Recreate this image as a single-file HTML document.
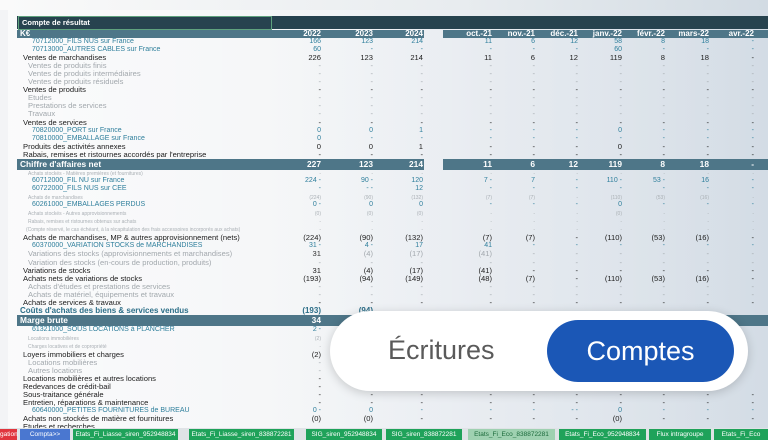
<!DOCTYPE html>
<html><head><meta charset="utf-8"><style>
*{margin:0;padding:0;box-sizing:border-box}
body{width:768px;height:440px;overflow:hidden;position:relative;font-family:"Liberation Sans",sans-serif;background:linear-gradient(90deg,#f3f4f6 0%,#f1f3f5 35%,#e3e8ee 65%,#d3dce5 100%)}
.top{position:absolute;left:0;top:0;width:768px;height:10px;background:linear-gradient(90deg,#fafafa,#e8ecef 60%,#d2dbe3)}
.sheet{position:absolute;left:8px;top:10px;width:760px;height:418px;background:linear-gradient(90deg,rgba(255,255,255,.6),rgba(255,255,255,.2) 50%,rgba(255,255,255,0))}
.r{position:absolute;left:0;width:768px;height:8px;line-height:8px;font-size:7.6px;color:#1d1d1d;white-space:nowrap}
.r span{position:absolute;top:0}
.l{left:23px}
.t{color:#2f7f9c;font-size:7px}.t .l{left:32px}
.g{color:#a2a8ad}.g .l{left:28px}
.s{color:#aab0b5;font-size:5px}.s .l{left:28px}
.v{width:40px;text-align:right}
.a{left:281px}.b{left:333px}.c{left:383px}.d{left:452px}.e{left:495px}.f{left:538px}.h{left:582px}.i{left:625px}.j{left:669px}.k{left:714px}
.band{position:absolute;height:11px;background:#4e7688}
.r.w{color:#fff;font-weight:bold;font-size:8.4px;height:11px;line-height:11px}
.r.w .l{left:20px}
.tabs{position:absolute;left:0;top:428px;width:768px;height:12px;background:#dfe3e6}
.tab{position:absolute;top:1px;height:11px;font-size:6.5px;line-height:11px;color:#fff;text-align:center;background:#1fa25a}
</style></head><body>
<div class="top"></div>
<div class="sheet"></div>
<!-- header -->
<div style="position:absolute;left:17px;top:16px;width:751px;height:13px;background:#27434f"></div>
<div style="position:absolute;left:18px;top:16px;width:254px;height:14px;border:1px solid #5fa27e;color:#fff;font-weight:bold;font-size:7.5px;line-height:12px;padding-left:3px">Compte de résultat</div>
<div class="band" style="left:17px;top:30px;width:407px;height:8px;background:#4e7688"></div>
<div class="band" style="left:443px;top:30px;width:325px;height:8px;background:#4e7688"></div>
<div class="r w" style="top:29px;height:9px;line-height:9px;font-size:8px"><span class="l">K€</span><span class="v a">2022</span><span class="v b">2023</span><span class="v c">2024</span><span class="v d">oct.-21</span><span class="v e">nov.-21</span><span class="v f">déc.-21</span><span class="v h">janv.-22</span><span class="v i">févr.-22</span><span class="v j">mars-22</span><span class="v k">avr.-22</span></div>

<div class="r t" style="top:38px"><span class="l">70712000_FILS NUS sur France</span><span class="v a">166</span><span class="v b">123</span><span class="v c">214</span><span class="v d">11</span><span class="v e">6</span><span class="v f">12</span><span class="v h">58</span><span class="v i">8</span><span class="v j">18</span><span class="v k">-</span></div>
<div class="r t" style="top:46px"><span class="l">70713000_AUTRES CABLES sur France</span><span class="v a">60</span><span class="v b">-</span><span class="v c">-</span><span class="v d">-</span><span class="v e">-</span><span class="v f">-</span><span class="v h">60</span><span class="v i">-</span><span class="v j">-</span><span class="v k">-</span></div>
<div class="r" style="top:54px"><span class="l">Ventes de marchandises</span><span class="v a">226</span><span class="v b">123</span><span class="v c">214</span><span class="v d">11</span><span class="v e">6</span><span class="v f">12</span><span class="v h">119</span><span class="v i">8</span><span class="v j">18</span><span class="v k">-</span></div>
<div class="r g" style="top:62px"><span class="l">Ventes de produits finis</span><span class="v a">-</span><span class="v b">-</span><span class="v c">-</span><span class="v d">-</span><span class="v e">-</span><span class="v f">-</span><span class="v h">-</span><span class="v i">-</span><span class="v j">-</span><span class="v k">-</span></div>
<div class="r g" style="top:70px"><span class="l">Ventes de produits intermédiaires</span><span class="v a">-</span><span class="v b">-</span><span class="v c">-</span><span class="v d">-</span><span class="v e">-</span><span class="v f">-</span><span class="v h">-</span><span class="v i">-</span><span class="v j">-</span><span class="v k">-</span></div>
<div class="r g" style="top:78px"><span class="l">Ventes de produits résiduels</span><span class="v a">-</span><span class="v b">-</span><span class="v c">-</span><span class="v d">-</span><span class="v e">-</span><span class="v f">-</span><span class="v h">-</span><span class="v i">-</span><span class="v j">-</span><span class="v k">-</span></div>
<div class="r" style="top:86px"><span class="l">Ventes de produits</span><span class="v a">-</span><span class="v b">-</span><span class="v c">-</span><span class="v d">-</span><span class="v e">-</span><span class="v f">-</span><span class="v h">-</span><span class="v i">-</span><span class="v j">-</span><span class="v k">-</span></div>
<div class="r g" style="top:94px"><span class="l">Etudes</span><span class="v a">-</span><span class="v b">-</span><span class="v c">-</span><span class="v d">-</span><span class="v e">-</span><span class="v f">-</span><span class="v h">-</span><span class="v i">-</span><span class="v j">-</span><span class="v k">-</span></div>
<div class="r g" style="top:102px"><span class="l">Prestations de services</span><span class="v a">-</span><span class="v b">-</span><span class="v c">-</span><span class="v d">-</span><span class="v e">-</span><span class="v f">-</span><span class="v h">-</span><span class="v i">-</span><span class="v j">-</span><span class="v k">-</span></div>
<div class="r g" style="top:110px"><span class="l">Travaux</span><span class="v a">-</span><span class="v b">-</span><span class="v c">-</span><span class="v d">-</span><span class="v e">-</span><span class="v f">-</span><span class="v h">-</span><span class="v i">-</span><span class="v j">-</span><span class="v k">-</span></div>
<div class="r" style="top:119px"><span class="l">Ventes de services</span><span class="v a">-</span><span class="v b">-</span><span class="v c">-</span><span class="v d">-</span><span class="v e">-</span><span class="v f">-</span><span class="v h">-</span><span class="v i">-</span><span class="v j">-</span><span class="v k">-</span></div>
<div class="r t" style="top:127px"><span class="l">70820000_PORT sur France</span><span class="v a">0</span><span class="v b">0</span><span class="v c">1</span><span class="v d">-</span><span class="v e">-</span><span class="v f">-</span><span class="v h">0</span><span class="v i">-</span><span class="v j">-</span><span class="v k">-</span></div>
<div class="r t" style="top:135px"><span class="l">70810000_EMBALLAGE sur France</span><span class="v a">0</span><span class="v b">-</span><span class="v c">-</span><span class="v d">-</span><span class="v e">-</span><span class="v f">-</span><span class="v h">-</span><span class="v i">-</span><span class="v j">-</span><span class="v k">-</span></div>
<div class="r" style="top:143px"><span class="l">Produits des activités annexes</span><span class="v a">0</span><span class="v b">0</span><span class="v c">1</span><span class="v d">-</span><span class="v e">-</span><span class="v f">-</span><span class="v h">0</span><span class="v i">-</span><span class="v j">-</span><span class="v k">-</span></div>
<div class="r" style="top:151px"><span class="l">Rabais, remises et ristournes accordés par l'entreprise</span><span class="v a">-</span><span class="v b">-</span><span class="v c">-</span><span class="v d">-</span><span class="v e">-</span><span class="v f">-</span><span class="v h">-</span><span class="v i">-</span><span class="v j">-</span><span class="v k">-</span></div>
<div class="band" style="left:17px;top:159px;width:407px"></div><div class="band" style="left:443px;top:159px;width:325px"></div>
<div class="r w" style="top:159px"><span class="l">Chiffre d'affaires net</span><span class="v a">227</span><span class="v b">123</span><span class="v c">214</span><span class="v d">11</span><span class="v e">6</span><span class="v f">12</span><span class="v h">119</span><span class="v i">8</span><span class="v j">18</span><span class="v k">-</span></div>
<div class="r s" style="top:170px"><span class="l">Achats stockés - Matières premières (et fournitures)</span><span class="v a">-</span><span class="v b">-</span><span class="v c">-</span><span class="v d">-</span><span class="v e">-</span><span class="v f">-</span><span class="v h">-</span><span class="v i">-</span><span class="v j">-</span><span class="v k">-</span></div>
<div class="r t" style="top:177px"><span class="l">60712000_FIL NU sur France</span><span class="v a">224 -</span><span class="v b">90 -</span><span class="v c">120</span><span class="v d">7 -</span><span class="v e">7</span><span class="v f">-</span><span class="v h">110 -</span><span class="v i">53 -</span><span class="v j">16</span><span class="v k">-</span></div>
<div class="r t" style="top:185px"><span class="l">60722000_FILS NUS sur CEE</span><span class="v a">-</span><span class="v b">- -</span><span class="v c">12</span><span class="v d">-</span><span class="v e">-</span><span class="v f">-</span><span class="v h">-</span><span class="v i">-</span><span class="v j">-</span><span class="v k">-</span></div>
<div class="r s" style="top:194px"><span class="l">Achats de marchandises</span><span class="v a">(224)</span><span class="v b">(90)</span><span class="v c">(132)</span><span class="v d">(7)</span><span class="v e">(7)</span><span class="v f">-</span><span class="v h">(110)</span><span class="v i">(53)</span><span class="v j">(16)</span><span class="v k">-</span></div>
<div class="r t" style="top:201px"><span class="l">60261000_EMBALLAGES PERDUS</span><span class="v a">0 -</span><span class="v b">0</span><span class="v c">0</span><span class="v d">-</span><span class="v e">-</span><span class="v f">-</span><span class="v h">0</span><span class="v i">-</span><span class="v j">-</span><span class="v k">-</span></div>
<div class="r s" style="top:210px"><span class="l">Achats stockés - Autres approvisionnements</span><span class="v a">(0)</span><span class="v b">(0)</span><span class="v c">(0)</span><span class="v d">-</span><span class="v e">-</span><span class="v f">-</span><span class="v h">(0)</span><span class="v i">-</span><span class="v j">-</span><span class="v k">-</span></div>
<div class="r s" style="top:218px"><span class="l">Rabais, remises et ristournes obtenus sur achats</span><span class="v a">-</span><span class="v b">-</span><span class="v c">-</span><span class="v d">-</span><span class="v e">-</span><span class="v f">-</span><span class="v h">-</span><span class="v i">-</span><span class="v j">-</span><span class="v k">-</span></div>
<div class="r s" style="top:226px"><span class="l" style="left:26px">(Compte réservé, le cas échéant, à la récapitulation des frais accessoires incorporés aux achats)</span><span class="v a">-</span><span class="v b">-</span><span class="v c">-</span><span class="v d">-</span><span class="v e">-</span><span class="v f">-</span><span class="v h">-</span><span class="v i">-</span><span class="v j">-</span><span class="v k">-</span></div>
<div class="r" style="top:234px"><span class="l">Achats de marchandises, MP &amp; autres approvisionnement (nets)</span><span class="v a">(224)</span><span class="v b">(90)</span><span class="v c">(132)</span><span class="v d">(7)</span><span class="v e">(7)</span><span class="v f">-</span><span class="v h">(110)</span><span class="v i">(53)</span><span class="v j">(16)</span><span class="v k">-</span></div>
<div class="r t" style="top:242px"><span class="l">60370000_VARIATION STOCKS de MARCHANDISES</span><span class="v a">31 -</span><span class="v b">4 -</span><span class="v c">17</span><span class="v d">41</span><span class="v e">-</span><span class="v f">-</span><span class="v h">-</span><span class="v i">-</span><span class="v j">-</span><span class="v k">-</span></div>
<div class="r g" style="top:250px"><span class="l">Variations des stocks (approvisionnements et marchandises)</span><span class="v a" style="color:#333">31</span><span class="v b">(4)</span><span class="v c">(17)</span><span class="v d">(41)</span><span class="v e">-</span><span class="v f">-</span><span class="v h">-</span><span class="v i">-</span><span class="v j">-</span><span class="v k">-</span></div>
<div class="r g" style="top:259px"><span class="l">Variation des stocks (en-cours de production, produits)</span><span class="v a">-</span><span class="v b">-</span><span class="v c">-</span><span class="v d">-</span><span class="v e">-</span><span class="v f">-</span><span class="v h">-</span><span class="v i">-</span><span class="v j">-</span><span class="v k">-</span></div>
<div class="r" style="top:267px"><span class="l">Variations de stocks</span><span class="v a">31</span><span class="v b">(4)</span><span class="v c">(17)</span><span class="v d">(41)</span><span class="v e">-</span><span class="v f">-</span><span class="v h">-</span><span class="v i">-</span><span class="v j">-</span><span class="v k">-</span></div>
<div class="r" style="top:275px"><span class="l">Achats nets de variations de stocks</span><span class="v a">(193)</span><span class="v b">(94)</span><span class="v c">(149)</span><span class="v d">(48)</span><span class="v e">(7)</span><span class="v f">-</span><span class="v h">(110)</span><span class="v i">(53)</span><span class="v j">(16)</span><span class="v k">-</span></div>
<div class="r g" style="top:283px"><span class="l">Achats d'études et prestations de services</span><span class="v a">-</span><span class="v b">-</span><span class="v c">-</span><span class="v d">-</span><span class="v e">-</span><span class="v f">-</span><span class="v h">-</span><span class="v i">-</span><span class="v j">-</span><span class="v k">-</span></div>
<div class="r g" style="top:291px"><span class="l">Achats de matériel, équipements et travaux</span><span class="v a">-</span><span class="v b">-</span><span class="v c">-</span><span class="v d">-</span><span class="v e">-</span><span class="v f">-</span><span class="v h">-</span><span class="v i">-</span><span class="v j">-</span><span class="v k">-</span></div>
<div class="r" style="top:299px"><span class="l">Achats de services &amp; travaux</span><span class="v a">-</span><span class="v b">-</span><span class="v c">-</span><span class="v d">-</span><span class="v e">-</span><span class="v f">-</span><span class="v h">-</span><span class="v i">-</span><span class="v j">-</span><span class="v k">-</span></div>
<div class="r" style="top:307px;color:#2c6e88;font-weight:bold;font-size:8px"><span class="l" style="left:20px">Coûts d'achats des biens &amp; services vendus</span><span class="v a">(193)</span><span class="v b">(94)</span></div>
<div class="band" style="left:17px;top:315px;width:751px"></div>
<div class="r w" style="top:315px"><span class="l">Marge brute</span><span class="v a">34</span></div>
<div class="r t" style="top:326px"><span class="l">61321000_SOUS LOCATIONS à PLANCHER</span><span class="v a">2 -</span></div>
<div class="r s" style="top:335px"><span class="l">Locations immobilières</span><span class="v a">(2)</span></div>
<div class="r s" style="top:343px"><span class="l">Charges locatives et de copropriété</span><span class="v a">-</span></div>
<div class="r" style="top:351px"><span class="l">Loyers immobiliers et charges</span><span class="v a">(2)</span></div>
<div class="r g" style="top:359px"><span class="l">Locations mobilières</span><span class="v a">-</span></div>
<div class="r g" style="top:367px"><span class="l">Autres locations</span><span class="v a">-</span></div>
<div class="r" style="top:375px"><span class="l">Locations mobilières et autres locations</span><span class="v a">-</span></div>
<div class="r" style="top:383px"><span class="l">Redevances de crédit-bail</span><span class="v a">-</span></div>
<div class="r" style="top:391px"><span class="l">Sous-traitance générale</span><span class="v a">-</span><span class="v b">-</span><span class="v c">-</span><span class="v d">-</span><span class="v e">-</span><span class="v f">-</span><span class="v h">-</span><span class="v i">-</span><span class="v j">-</span><span class="v k">-</span></div>
<div class="r" style="top:399px"><span class="l">Entretien, réparations &amp; maintenance</span><span class="v a">-</span><span class="v b">-</span><span class="v c">-</span><span class="v d">-</span><span class="v e">-</span><span class="v f">-</span><span class="v h">-</span><span class="v i">-</span><span class="v j">-</span><span class="v k">-</span></div>
<div class="r t" style="top:407px"><span class="l">60640000_PETITES FOURNITURES de BUREAU</span><span class="v a">0 -</span><span class="v b">0</span><span class="v c">-</span><span class="v d">-</span><span class="v e">-</span><span class="v f">- -</span><span class="v h">0</span><span class="v i">-</span><span class="v j">-</span><span class="v k">-</span></div>
<div class="r" style="top:415px"><span class="l">Achats non stockés de matière et fournitures</span><span class="v a">(0)</span><span class="v b">(0)</span><span class="v c">-</span><span class="v d">-</span><span class="v e">-</span><span class="v f">-</span><span class="v h">(0)</span><span class="v i">-</span><span class="v j">-</span><span class="v k">-</span></div>
<div class="r" style="top:423px"><span class="l">Etudes et recherches</span></div>

<!-- toggle overlay -->
<div style="position:absolute;left:330px;top:311px;width:418px;height:80px;background:#fff;border-radius:40px;box-shadow:0 2px 10px rgba(0,0,0,.18)"></div>
<div style="position:absolute;left:388px;top:333px;font-size:27px;color:#5a5a5a;line-height:34px">Écritures</div>
<div style="position:absolute;left:547px;top:320px;width:187px;height:62px;background:#1b57b6;border-radius:31px;color:#fff;font-size:27px;line-height:62px;text-align:center">Comptes</div>

<div class="tabs">
<div class="tab" style="left:0;width:17px;background:#e0353d;text-align:right">gation</div>
<div class="tab" style="left:20px;width:50px;background:#4a77d0">Compta&gt;&gt;</div>
<div class="tab" style="left:73px;width:105px">Etats_Fi_Liasse_siren_952948834</div>
<div class="tab" style="left:189px;width:105px">Etats_Fi_Liasse_siren_838872281</div>
<div class="tab" style="left:306px;width:76px">SIG_siren_952948834</div>
<div class="tab" style="left:386px;width:76px">SIG_siren_838872281</div>
<div class="tab" style="left:468px;width:87px;background:#9fd1b1;color:#1c6b3c">Etats_Fi_Eco_838872281</div>
<div class="tab" style="left:559px;width:87px">Etats_Fi_Eco_952948834</div>
<div class="tab" style="left:649px;width:62px">Flux intragroupe</div>
<div class="tab" style="left:714px;width:54px">Etats_Fi_Eco</div>
</div>
</body></html>
